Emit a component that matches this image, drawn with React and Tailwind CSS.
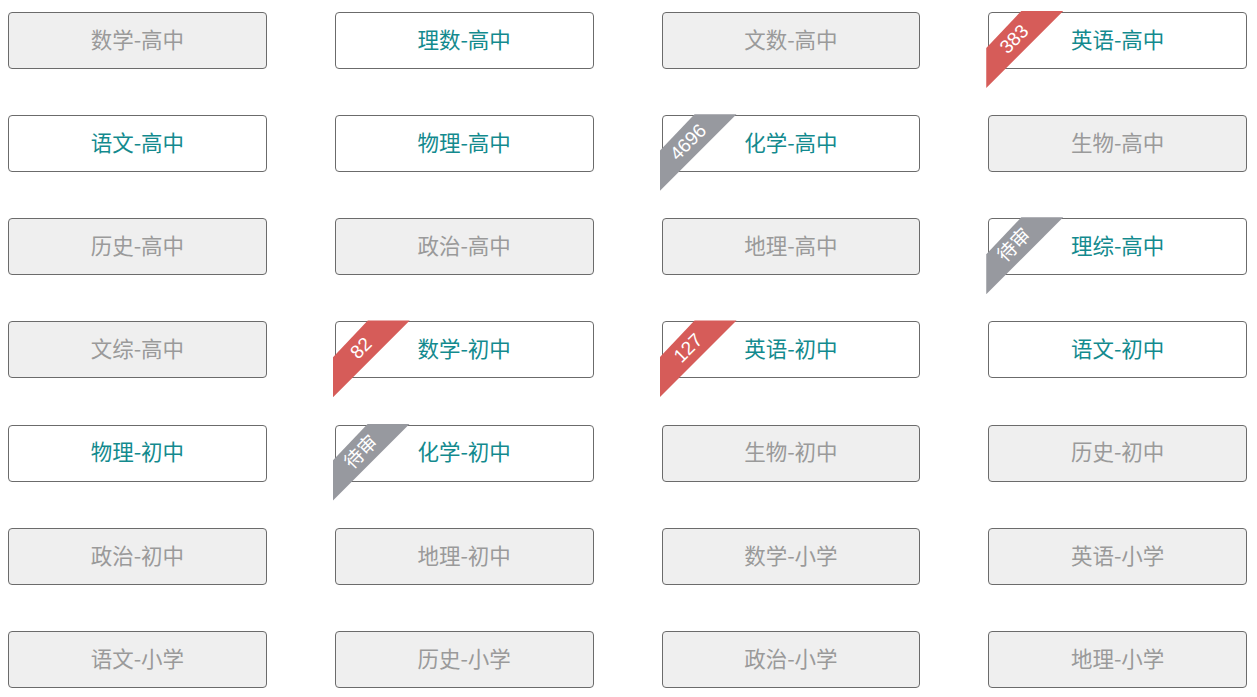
import React from "react";

const items = [
  ["数学-高中", 0], ["理数-高中", 1], ["文数-高中", 0], ["英语-高中", 1, "383", "red"],
  ["语文-高中", 1], ["物理-高中", 1], ["化学-高中", 1, "4696", "gray"], ["生物-高中", 0],
  ["历史-高中", 0], ["政治-高中", 0], ["地理-高中", 0], ["理综-高中", 1, "待审", "gray"],
  ["文综-高中", 0], ["数学-初中", 1, "82", "red"], ["英语-初中", 1, "127", "red"], ["语文-初中", 1],
  ["物理-初中", 1], ["化学-初中", 1, "待审", "gray"], ["生物-初中", 0], ["历史-初中", 0],
  ["政治-初中", 0], ["地理-初中", 0], ["数学-小学", 0], ["英语-小学", 0],
  ["语文-小学", 0], ["历史-小学", 0], ["政治-小学", 0], ["地理-小学", 0],
];

function Ribbon({ label, color }) {
  return (
    <div
      className={
        "absolute left-[-3px] top-[-2px] w-[77px] h-[77px] [clip-path:polygon(45.5%_0,100%_0,0_100%,0_48%)] " +
        (color === "red" ? "bg-[#d65c59]" : "bg-[#97999f]")
      }
    >
      <span
        className="absolute left-[28px] top-[28px] -translate-x-1/2 -translate-y-1/2 -rotate-45 whitespace-nowrap text-white text-[19px] leading-none font-['Liberation_Sans','Noto_Sans_CJK_SC',sans-serif]"
      >
        {label}
      </span>
    </div>
  );
}

export default function App() {
  return (
    <div className="w-[1257px] h-[697px] bg-white overflow-hidden">
      <div className="ml-[8px] pt-[12px] w-[1239px] grid grid-cols-4 gap-x-[68px] gap-y-[46.17px]">
        {items.map(([name, active, badge, color], i) => (
          <div
            key={i}
            className={
              "relative h-[57px] rounded-[4px] border border-[#6b6b6b] flex items-center justify-center text-[21.5px] leading-none font-['Noto_Sans_CJK_SC',sans-serif] " +
              (active ? "bg-white text-[#138a8e]" : "bg-[#efefef] text-[#9a9a9a]")
            }
          >
            {badge && <Ribbon label={badge} color={color} />}
            <span className="relative leading-none -translate-y-[2px]">{name}</span>
          </div>
        ))}
      </div>
    </div>
  );
}
